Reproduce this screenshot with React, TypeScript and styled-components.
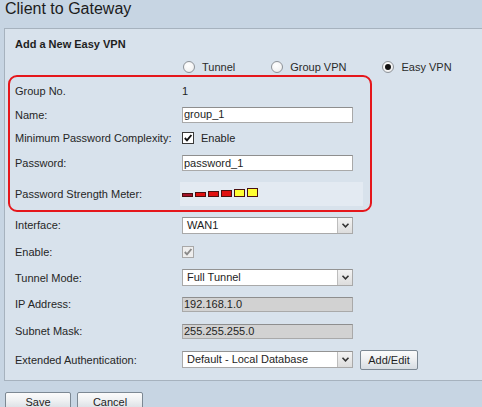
import React from "react";
import styled, { createGlobalStyle } from "styled-components";

const GlobalStyle = createGlobalStyle`
  html, body { margin: 0; padding: 0; }
  body {
    background: #c7d5e3;
    font-family: "Liberation Sans", Arial, sans-serif;
    font-size: 11px;
    color: #2a2a2a;
  }
`;

const Page = styled.div`
  width: 482px;
  height: 407px;
  overflow: hidden;
  background: #c7d5e3;
`;

const Title = styled.h1`
  margin: 0;
  padding-left: 5px;
  font-size: 16px;
  font-weight: normal;
  line-height: 18px;
  height: 18px;
  color: #1c1c1c;
`;

const Panel = styled.section`
  margin: 10px 0 0 4px;
  height: 353px;
  box-sizing: border-box;
  border: 1px solid #a6b2be;
  border-right: none;
  background: #d8e2ec;
  padding-top: 8px;
  display: flex;
  flex-direction: column;
`;

const Heading = styled.h2`
  margin: 0;
  padding-left: 10px;
  font-size: 11px;
  font-weight: bold;
  line-height: 14px;
  height: 14px;
  color: #1e1e1e;
`;

const RadioRow = styled.div`
  margin-top: 8px;
  height: 16px;
  padding-left: 178px;
  display: flex;
  align-items: center;
  gap: 36px;
`;

const RadioOption = styled.label`
  display: flex;
  align-items: center;
  gap: 7px;
  line-height: 14px;
`;

const RadioDot = styled.span<{ $checked?: boolean }>`
  width: 12px;
  height: 12px;
  box-sizing: border-box;
  border-radius: 50%;
  border: 1px solid #8e9399;
  background: radial-gradient(circle at 40% 35%, #ffffff 0%, #f4f4f4 60%, #dcdcdc 100%);
  display: flex;
  align-items: center;
  justify-content: center;
  &::after {
    content: "";
    width: 6px;
    height: 6px;
    border-radius: 50%;
    background: #111;
    display: ${(p) => (p.$checked ? "block" : "none")};
  }
`;

const RedBox = styled.div`
  margin: 0 0 0 3px;
  width: 364px;
  box-sizing: border-box;
  border: 2px solid #e5161b;
  border-radius: 9px;
  padding: 2px 0 4px 5px;
`;

const Rows = styled.div`
  padding-left: 10px;
`;

const Row = styled.div<{ $h: number; $gap?: number }>`
  height: ${(p) => p.$h}px;
  margin-top: ${(p) => p.$gap ?? 0}px;
  display: flex;
  align-items: center;
`;

const Label = styled.span`
  flex: 0 0 167px;
  line-height: 14px;
  white-space: nowrap;
  color: #262626;
`;

const Value = styled.span`
  line-height: 14px;
  color: #1e1e1e;
`;

const TextBox = styled.div<{ $disabled?: boolean }>`
  width: 171px;
  height: ${(p) => (p.$disabled ? 15 : 16)}px;
  box-sizing: border-box;
  border: 1px solid #a9a9a9;
  border-top-color: #8e8e8e;
  background: ${(p) => (p.$disabled ? "#d2d2d2" : "#ffffff")};
  padding-left: 1px;
  display: flex;
  align-items: center;
  line-height: 13px;
  color: #1e1e1e;
`;

const SelectBox = styled.div`
  width: 171px;
  height: 17px;
  box-sizing: border-box;
  border: 1px solid #a9a9a9;
  border-top-color: #939393;
  background: #fff;
  display: flex;
  align-items: stretch;
`;

const SelectText = styled.span`
  flex: 1;
  padding-left: 4px;
  line-height: 15px;
  color: #1e1e1e;
  white-space: nowrap;
`;

const SelectArrow = styled.span`
  width: 15px;
  box-sizing: border-box;
  border-left: 1px solid #bdbdbd;
  background: linear-gradient(#f3f3f3, #dddddd);
  display: flex;
  align-items: center;
  justify-content: center;
`;

const CheckBox = styled.span<{ $disabled?: boolean }>`
  width: 12px;
  height: 12px;
  box-sizing: border-box;
  border: 1px solid ${(p) => (p.$disabled ? "#a8a8a8" : "#3a3a3a")};
  background: ${(p) => (p.$disabled ? "#eeeeee" : "#ffffff")};
  display: flex;
  align-items: center;
  justify-content: center;
`;

const CheckWrap = styled.span`
  display: flex;
  align-items: center;
  gap: 7px;
`;

const MeterCell = styled.div`
  margin-left: -2px;
  padding-left: 2px;
  width: 183px;
  height: 24px;
  box-sizing: border-box;
  background: #e3eaf2;
  display: flex;
  align-items: center;
`;

const Bars = styled.div`
  height: 9px;
  margin-bottom: 3px;
  display: flex;
  align-items: flex-end;
  gap: 2px;
`;

const Bar = styled.span<{ $h: number; $color: string }>`
  width: 11px;
  height: ${(p) => p.$h}px;
  box-sizing: border-box;
  border: 1px solid #4a1010;
  background: ${(p) => p.$color};
`;

const Button = styled.button<{ $w: number; $h: number }>`
  width: ${(p) => p.$w}px;
  height: ${(p) => p.$h}px;
  padding: 0;
  box-sizing: border-box;
  border: 1px solid #7c8893;
  border-radius: 2px;
  background: linear-gradient(#fbfbfb 0%, #eef0f2 45%, #d6dce2 100%);
  font-family: "Liberation Sans", Arial, sans-serif;
  font-size: 11px;
  line-height: 12px;
  color: #1e1e1e;
`;

const AddEdit = styled(Button)`
  margin-left: 7px;
`;

const Footer = styled.div`
  margin-top: 11px;
  padding-left: 5px;
  display: flex;
  gap: 6px;
`;

const Chevron = () => (
  <svg width="9" height="7" viewBox="0 0 9 7">
    <path d="M1.5 1.8 L4.5 4.8 L7.5 1.8" fill="none" stroke="#333" strokeWidth="1.6" />
  </svg>
);

const Tick = ({ color }: { color: string }) => (
  <svg width="10" height="10" viewBox="0 0 10 10">
    <path d="M1.8 5 L4 7.3 L8.4 2" fill="none" stroke={color} strokeWidth="1.9" />
  </svg>
);

const Select = ({ value }: { value: string }) => (
  <SelectBox>
    <SelectText>{value}</SelectText>
    <SelectArrow>
      <Chevron />
    </SelectArrow>
  </SelectBox>
);

const bars = [
  { h: 4, c: "#a3122a" },
  { h: 5, c: "#e01010" },
  { h: 6, c: "#e01010" },
  { h: 7, c: "#e01010" },
  { h: 8, c: "#ffff33" },
  { h: 9, c: "#ffff33" },
];

export default function App() {
  return (
    <Page>
      <GlobalStyle />
      <Title>Client to Gateway</Title>
      <Panel>
        <Heading>Add a New Easy VPN</Heading>
        <RadioRow>
          <RadioOption>
            <RadioDot />
            Tunnel
          </RadioOption>
          <RadioOption>
            <RadioDot />
            Group VPN
          </RadioOption>
          <RadioOption>
            <RadioDot $checked />
            Easy VPN
          </RadioOption>
        </RadioRow>
        <RedBox>
          <Row $h={24}>
            <Label>Group No.</Label>
            <Value>1</Value>
          </Row>
          <Row $h={23}>
            <Label>Name:</Label>
            <TextBox>group_1</TextBox>
          </Row>
          <Row $h={24}>
            <Label>Minimum Password Complexity:</Label>
            <CheckWrap>
              <CheckBox>
                <Tick color="#111" />
              </CheckBox>
              <Value>Enable</Value>
            </CheckWrap>
          </Row>
          <Row $h={26}>
            <Label>Password:</Label>
            <TextBox>password_1</TextBox>
          </Row>
          <Row $h={24} $gap={6}>
            <Label>Password Strength Meter:</Label>
            <MeterCell>
              <Bars>
                {bars.map((b, i) => (
                  <Bar key={i} $h={b.h} $color={b.c} />
                ))}
              </Bars>
            </MeterCell>
          </Row>
        </RedBox>
        <Rows>
          <Row $h={26}>
            <Label>Interface:</Label>
            <Select value="WAN1" />
          </Row>
          <Row $h={27}>
            <Label>Enable:</Label>
            <CheckBox $disabled>
              <Tick color="#8a8a8a" />
            </CheckBox>
          </Row>
          <Row $h={25}>
            <Label>Tunnel Mode:</Label>
            <Select value="Full Tunnel" />
          </Row>
          <Row $h={28}>
            <Label>IP Address:</Label>
            <TextBox $disabled>192.168.1.0</TextBox>
          </Row>
          <Row $h={26}>
            <Label>Subnet Mask:</Label>
            <TextBox $disabled>255.255.255.0</TextBox>
          </Row>
          <Row $h={31}>
            <Label>Extended Authentication:</Label>
            <Select value="Default - Local Database" />
            <AddEdit $w={58} $h={20}>Add/Edit</AddEdit>
          </Row>
        </Rows>
      </Panel>
      <Footer>
        <Button $w={66} $h={19}>Save</Button>
        <Button $w={66} $h={19}>Cancel</Button>
      </Footer>
    </Page>
  );
}
